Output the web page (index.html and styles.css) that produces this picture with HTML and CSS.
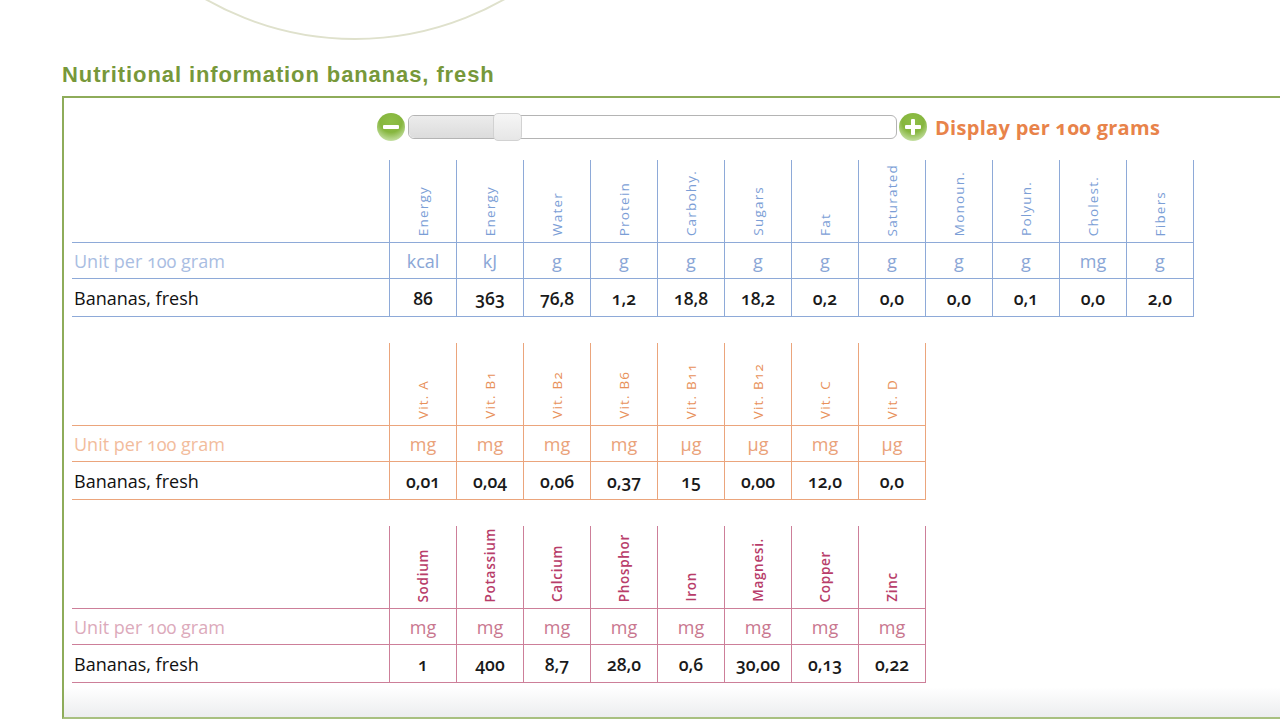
FILE: index.html
```html
<!DOCTYPE html>
<html>
<head>
<meta charset="utf-8">
<link rel="stylesheet" href="styles.css">
</head>
<body>
<div class="page">
  <svg class="arc" width="700" height="42" viewBox="0 0 700 42">
    <circle cx="355" cy="-261" r="300" fill="none" stroke="#dfe1cc" stroke-width="2"/>
  </svg>
  <h1 class="title">Nutritional information bananas, fresh</h1>
  <div class="box">
    <div class="slider-row">
      <span class="round-btn minus"><span class="bar-h"></span></span>
      <div class="track">
        <div class="fill"></div>
        <div class="handle"></div>
      </div>
      <span class="round-btn plus"><span class="bar-h"></span><span class="bar-v"></span></span>
      <span class="display">Display per 100 grams</span>
    </div>

    <table class="nt blue wide">
      <tr class="hdr">
        <th class="lbl"></th>
        <th><div class="hc"><span>Energy</span></div></th><th><div class="hc"><span>Energy</span></div></th><th><div class="hc"><span>Water</span></div></th><th><div class="hc"><span>Protein</span></div></th>
        <th><div class="hc"><span>Carbohy.</span></div></th><th><div class="hc"><span>Sugars</span></div></th><th><div class="hc"><span>Fat</span></div></th><th><div class="hc"><span>Saturated</span></div></th>
        <th><div class="hc"><span>Monoun.</span></div></th><th><div class="hc"><span>Polyun.</span></div></th><th><div class="hc"><span>Cholest.</span></div></th><th><div class="hc"><span>Fibers</span></div></th>
      </tr>
      <tr class="unit">
        <td class="lbl">Unit per 100 gram</td>
        <td>kcal</td><td>kJ</td><td>g</td><td>g</td><td>g</td><td>g</td><td>g</td><td>g</td><td>g</td><td>g</td><td>mg</td><td>g</td>
      </tr>
      <tr class="val">
        <td class="lbl">Bananas, fresh</td>
        <td>86</td><td>363</td><td>76,8</td><td>1,2</td><td>18,8</td><td>18,2</td><td>0,2</td><td>0,0</td><td>0,0</td><td>0,1</td><td>0,0</td><td>2,0</td>
      </tr>
    </table>

    <table class="nt orange">
      <tr class="hdr">
        <th class="lbl"></th>
        <th><div class="hc"><span>Vit. A</span></div></th><th><div class="hc"><span>Vit. B1</span></div></th><th><div class="hc"><span>Vit. B2</span></div></th><th><div class="hc"><span>Vit. B6</span></div></th>
        <th><div class="hc"><span>Vit. B11</span></div></th><th><div class="hc"><span>Vit. B12</span></div></th><th><div class="hc"><span>Vit. C</span></div></th><th><div class="hc"><span>Vit. D</span></div></th>
      </tr>
      <tr class="unit">
        <td class="lbl">Unit per 100 gram</td>
        <td>mg</td><td>mg</td><td>mg</td><td>mg</td><td>µg</td><td>µg</td><td>mg</td><td>µg</td>
      </tr>
      <tr class="val">
        <td class="lbl">Bananas, fresh</td>
        <td>0,01</td><td>0,04</td><td>0,06</td><td>0,37</td><td>15</td><td>0,00</td><td>12,0</td><td>0,0</td>
      </tr>
    </table>

    <table class="nt pink">
      <tr class="hdr">
        <th class="lbl"></th>
        <th><div class="hc"><span>Sodium</span></div></th><th><div class="hc"><span>Potassium</span></div></th><th><div class="hc"><span>Calcium</span></div></th><th><div class="hc"><span>Phosphor</span></div></th>
        <th><div class="hc"><span>Iron</span></div></th><th><div class="hc"><span>Magnesi.</span></div></th><th><div class="hc"><span>Copper</span></div></th><th><div class="hc"><span>Zinc</span></div></th>
      </tr>
      <tr class="unit">
        <td class="lbl">Unit per 100 gram</td>
        <td>mg</td><td>mg</td><td>mg</td><td>mg</td><td>mg</td><td>mg</td><td>mg</td><td>mg</td>
      </tr>
      <tr class="val">
        <td class="lbl">Bananas, fresh</td>
        <td>1</td><td>400</td><td>8,7</td><td>28,0</td><td>0,6</td><td>30,00</td><td>0,13</td><td>0,22</td>
      </tr>
    </table>
  </div>
</div>
</body>
</html>
```

FILE: styles.css
```css
html, body {
  margin: 0;
  padding: 0;
  background: #ffffff;
  overflow: hidden;
}
body {
  width: 1280px;
  height: 720px;
  font-family: "Open Sans", "Noto Sans", sans-serif;
}
.page {
  width: 1280px;
  height: 720px;
  overflow: hidden;
}
.arc {
  display: block;
}
.title {
  margin: 20px 0 0 62px;
  height: 26px;
  line-height: 26px;
  font-family: "Liberation Sans", Arial, sans-serif;
  font-size: 22px;
  font-weight: bold;
  letter-spacing: 0.9px;
  color: #77983a;
}
.box {
  margin: 8px 0 0 62px;
  width: 1300px;
  border: 2px solid #8eac5a;
  border-bottom-color: #a8c080;
  padding: 13px 0 34px 8px;
  background: linear-gradient(to bottom, #ffffff 0, #ffffff calc(100% - 30px), #ecedef 100%);
}
.slider-row {
  display: flex;
  align-items: center;
  height: 32px;
  padding-left: 305px;
  margin-bottom: 17px;
}
.round-btn {
  position: relative;
  width: 28px;
  height: 28px;
  border-radius: 50%;
  background: radial-gradient(circle at 50% 30%, #8fbf48 0, #86b63e 45%, #b9d890 75%, #eef6e2 100%);
  flex: none;
}
.bar-h {
  position: absolute;
  left: 6px;
  top: 12px;
  width: 16px;
  height: 4px;
  border-radius: 1px;
  background: #ffffff;
}
.bar-v {
  position: absolute;
  left: 12px;
  top: 6px;
  width: 4px;
  height: 16px;
  border-radius: 1px;
  background: #ffffff;
}
.track {
  position: relative;
  margin-left: 3px;
  width: 487px;
  height: 22px;
  border: 1px solid #b4b4b4;
  border-radius: 6px;
  background: #ffffff;
  display: flex;
  align-items: center;
}
.fill {
  width: 86px;
  height: 22px;
  border-radius: 6px 0 0 6px;
  background: linear-gradient(to bottom, #ececec, #dcdcdc);
}
.handle {
  position: absolute;
  left: 84px;
  top: -3px;
  width: 27px;
  height: 26px;
  border: 1px solid #d2d2d2;
  border-radius: 5px;
  background: linear-gradient(to bottom, #f6f6f6, #e6e6e6);
}
.plus {
  margin-left: 2px;
}
.display {
  margin-left: 8px;
  font-size: 20px;
  font-weight: bold;
  color: #e8834a;
  font-variant-numeric: oldstyle-nums;
  letter-spacing: 0.3px;
}
.nt {
  border-collapse: collapse;
  table-layout: fixed;
  margin-bottom: 26px;
  font-variant-numeric: oldstyle-nums;
}
.nt:last-child {
  margin-bottom: 0;
}
.nt th, .nt td {
  width: 66px;
  padding: 0;
  text-align: center;
}
.nt .lbl {
  width: 315px;
  text-align: left;
  padding-left: 2px;
}
.nt .hdr th {
  height: 82px;
  vertical-align: bottom;
  border-left-style: solid;
  border-left-width: 1px;
  border-right-style: solid;
  border-right-width: 1px;
}
.nt .hdr th.lbl {
  border-left-style: none;
  border-right-style: none;
}
.hc {
  box-sizing: border-box;
  height: 82px;
  padding-bottom: 6px;
  display: flex;
  align-items: flex-end;
  justify-content: center;
  overflow: hidden;
}
.hc span {
  writing-mode: vertical-rl;
  transform: rotate(180deg);
  font-size: 13.5px;
  letter-spacing: 1.2px;
  font-weight: normal;
  line-height: 15px;
  white-space: nowrap;
}
.nt .unit td, .nt .val td {
  border-style: solid;
  border-width: 1px;
}
.nt .unit td {
  height: 35px;
  font-size: 18px;
}
.nt .val td {
  height: 37px;
  font-size: 17.5px;
  font-weight: 600;
  color: #1a1a1a;
}
.nt .unit td.lbl, .nt .val td.lbl {
  border-left-style: none;
}
.nt .val td.lbl {
  font-size: 18px;
  font-weight: 500;
  color: #111111;
}

/* blue */
.blue th, .blue td { border-color: #8eaad8; }
.blue .hc span { color: #7b9ed6; }
.blue .unit td { color: #8aa6d6; }
.blue .unit td.lbl { color: #a9bde2; }

/* orange */
.orange th, .orange td { border-color: #eba57c; }
.orange .hc span { color: #e8915a; }
.orange .unit td { color: #eaa27a; }
.orange .unit td.lbl { color: #f2bc9c; }

/* pink */
.pink th, .pink td { border-color: #cd7f99; }
.pink .hc span { color: #b83d6a; font-weight: 600; letter-spacing: 0.7px; }
.pink .unit td { color: #c9778f; }
.pink .unit td.lbl { color: #dcaabb; }
```
